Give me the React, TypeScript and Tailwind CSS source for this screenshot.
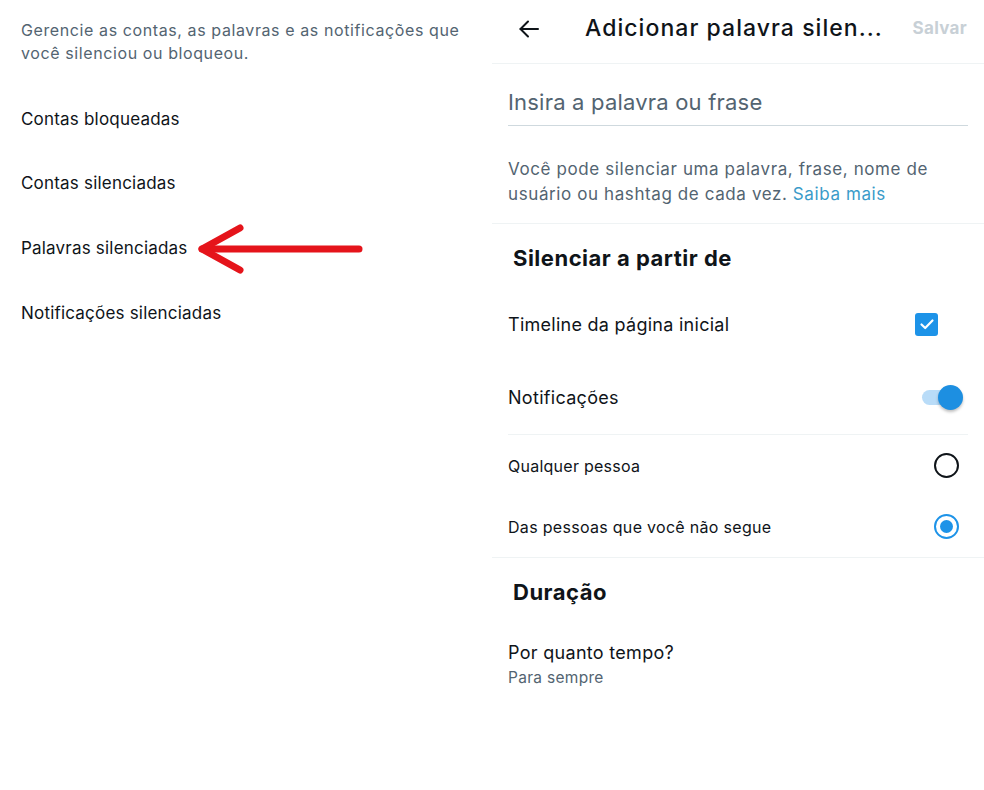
import React from 'react';

const font = { fontFamily: 'Inter, Roboto, "Noto Sans", sans-serif' };

function BackArrow() {
  return (
    <svg width="24" height="24" viewBox="0 0 24 24" fill="none" stroke="#0f1419" strokeWidth="2" strokeLinecap="round" strokeLinejoin="round">
      <path d="M21 12H3.5" />
      <path d="M11 4.5L3.5 12L11 19.5" />
    </svg>
  );
}

function RedArrow() {
  return (
    <svg width="168" height="50" viewBox="0 0 168 50" fill="none" stroke="#e5141b" strokeWidth="7" strokeLinecap="round" strokeLinejoin="round">
      <path d="M163 25H6" />
      <path d="M44 4L6 25L44 46" />
    </svg>
  );
}

function Checkbox() {
  return (
    <div className="w-[23px] h-[23px] rounded-[3px] bg-[#1d93e8] flex items-center justify-center">
      <svg width="16" height="16" viewBox="0 0 16 16" fill="none" stroke="white" strokeWidth="2.2" strokeLinecap="round" strokeLinejoin="round">
        <path d="M2.5 8.5L6.2 12L13.5 4.5" />
      </svg>
    </div>
  );
}

function Toggle() {
  return (
    <div className="relative w-[41px] h-[26px] flex items-center">
      <div className="w-[36px] h-[15px] rounded-full bg-[#b9dcf8]" />
      <div className="absolute right-0 top-0 w-[25px] h-[25px] rounded-full bg-[#1d8fe1] shadow-[0_2px_3px_rgba(0,0,0,0.25)]" />
    </div>
  );
}

function Radio({ checked }: { checked?: boolean }) {
  if (checked) {
    return (
      <div className="w-[25px] h-[25px] rounded-full border-2 border-[#1d93e8] flex items-center justify-center">
        <div className="w-[13px] h-[13px] rounded-full bg-[#1d93e8]" />
      </div>
    );
  }
  return <div className="w-[25px] h-[25px] rounded-full border-2 border-[#0f1419]" />;
}

export default function App() {
  const leftItems = ['Contas bloqueadas', 'Contas silenciadas', 'Palavras silenciadas', 'Notificações silenciadas'];

  return (
    <div className="w-[984px] h-[790px] bg-white flex overflow-hidden" style={font}>
      {/* Left screen */}
      <div className="w-[492px] shrink-0 pl-[21px] pt-[19px]">
        <p className="text-[16px] leading-[23px] tracking-[0.6px] text-[#536471] pr-[20px]">
          Gerencie as contas, as palavras e as notificações que você silenciou ou bloqueou.
        </p>
        <div className="mt-[22px]">
          {leftItems.map((item) => (
            <div key={item} className="h-[64.7px] flex items-center text-[17px] tracking-[0.2px] text-[#0f1419]">
              <span>{item}</span>
              {item === 'Palavras silenciadas' && (
                <span className="ml-[8px] flex items-center">
                  <RedArrow />
                </span>
              )}
            </div>
          ))}
        </div>
      </div>

      {/* Right screen */}
      <div className="w-[492px] shrink-0 flex flex-col">
        <div className="h-[64px] border-b border-[#eff3f4] flex items-center pl-[25px] pr-[17px] pb-[6px]">
          <BackArrow />
          <span className="ml-[44px] text-[23px] tracking-[1.05px] font-medium text-[#0f1419]">
            Adicionar palavra silen...
          </span>
          <span className="ml-auto text-[17px] tracking-[0.3px] font-bold text-[#c8d0d6]">Salvar</span>
        </div>

        <div className="mx-[16px] pt-[26px] pb-[11px] border-b border-[#cfd9de]">
          <div className="text-[22px] leading-[24px] tracking-[0.2px] text-[#536471]">Insira a palavra ou frase</div>
        </div>

        <div className="border-b border-[#eff3f4] px-[16px] pt-[31px] pb-[16px]">
          <p className="text-[17px] leading-[25px] tracking-[0.6px] text-[#536471]">
            <span>Você pode silenciar uma palavra, frase, nome de usuário ou hashtag de cada vez. </span>
            <span className="text-[#3a9bc9]">Saiba mais</span>
          </p>
        </div>

        <div className="pl-[21px] pt-[20px] text-[22px] leading-[28px] tracking-[0.5px] font-bold text-[#0f1419]">
          Silenciar a partir de
        </div>

        <div className="mt-[15px] h-[74px] px-[16px] flex items-center justify-between">
          <span className="text-[18px] tracking-[0.27px] text-[#0f1419]">Timeline da página inicial</span>
          <span className="mr-[30px]">
            <Checkbox />
          </span>
        </div>
        <div className="h-[74px] mx-[16px] flex items-center justify-between border-b border-[#eff3f4]">
          <span className="text-[18px] tracking-[0.3px] text-[#0f1419]">Notificações</span>
          <span className="mr-[5px]">
            <Toggle />
          </span>
        </div>

        <div className="h-[61px] px-[16px] flex items-center justify-between">
          <span className="text-[16px] tracking-[0.25px] text-[#0f1419]">Qualquer pessoa</span>
          <span className="mr-[9px]">
            <Radio />
          </span>
        </div>
        <div className="h-[62px] px-[16px] flex items-center justify-between border-b border-[#eff3f4]">
          <span className="text-[16px] tracking-[0.3px] text-[#0f1419]">Das pessoas que você não segue</span>
          <span className="mr-[9px]">
            <Radio checked />
          </span>
        </div>

        <div className="pl-[21px] pt-[20px] text-[22px] leading-[28px] tracking-[0.5px] font-bold text-[#0f1419]">Duração</div>

        <div className="px-[16px] mt-[35px]">
          <div className="text-[18px] leading-[24px] tracking-[0.3px] text-[#0f1419]">Por quanto tempo?</div>
          <div className="text-[15.5px] leading-[20px] tracking-[0.3px] text-[#536471] mt-[3px]">Para sempre</div>
        </div>
      </div>
    </div>
  );
}
